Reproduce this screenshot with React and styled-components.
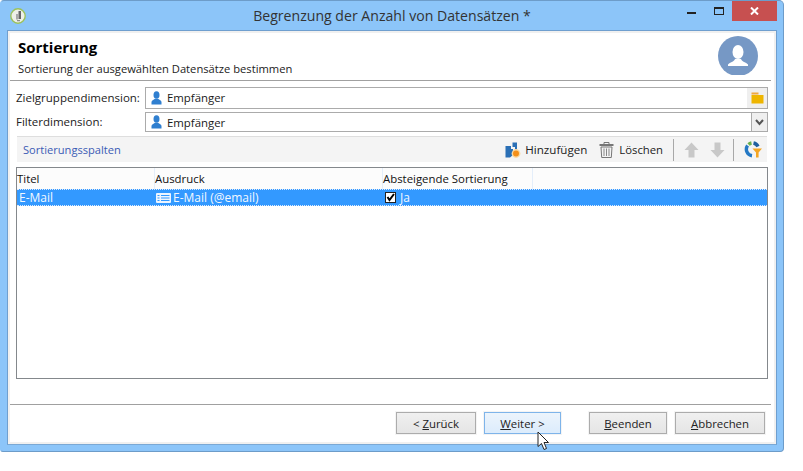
import React from "react";
import styled, { createGlobalStyle } from "styled-components";

const GlobalStyle = createGlobalStyle`
  html, body {
    margin: 0;
    padding: 0;
    background: #fff;
  }
  body {
    width: 803px;
    height: 471px;
    overflow: hidden;
    font-family: "Open Sans", "Liberation Sans", sans-serif;
    font-size: 11.5px;
    color: #1a1a1a;
  }
`;

const Window = styled.div`
  position: relative;
  box-sizing: border-box;
  width: 784px;
  height: 452px;
  display: flex;
  flex-direction: column;
  background: #8cc5f9;
  border: 1px solid #6d9cc9;
  border-left-color: #8cc5f9;
  border-radius: 4px 5px 4px 3px;
  padding: 0 6px 6px 6px;
`;

const TitleBar = styled.div`
  position: relative;
  height: 29px;
  flex: none;
  display: flex;
  align-items: center;
  justify-content: center;
`;

const AppIcon = styled.svg`
  position: absolute;
  left: 3px;
  top: 7px;
`;

const Title = styled.div`
  font-size: 14.1px;
  color: #333;
`;

const Controls = styled.div`
  position: absolute;
  right: 0;
  top: 0;
  display: flex;
  align-items: flex-start;
`;

const ControlButton = styled.div`
  width: ${(p) => p.$w}px;
  height: 20px;
  display: flex;
  align-items: center;
  justify-content: center;
  background: ${(p) => (p.$close ? "#c75050" : "transparent")};
`;

const Client = styled.div`
  flex: 1;
  min-height: 0;
  display: flex;
  flex-direction: column;
  background: #fff;
  border: 1px solid #6f9fcf;
  border-bottom-color: #7aa8d4;
  box-shadow: inset 0 0 0 2px #f0f0f0;
  padding: 2px 3px 2px 2px;
`;

const Header = styled.div`
  height: 47px;
  flex: none;
  display: flex;
  align-items: flex-start;
  justify-content: space-between;
  padding: 0 13px 0 8px;
  border-bottom: 1px solid #a0a0a0;
  margin-right: 2px;
`;

const HeaderText = styled.div`
  display: flex;
  flex-direction: column;
`;

const Heading = styled.div`
  font-size: 15px;
  font-weight: 700;
  color: #000;
  line-height: 19px;
  margin-top: 5px;
`;

const SubHeading = styled.div`
  font-size: 11.2px;
  line-height: 15px;
  margin-top: 4px;
  color: #222;
`;

const Avatar = styled.div`
  width: 40px;
  height: 39px;
  margin-top: 3px;
  overflow: hidden;
`;

const Form = styled.div`
  display: flex;
  flex-direction: column;
  margin: 6px 0 0 6px;
  padding-right: 5px;
`;

const FieldRow = styled.div`
  display: flex;
  align-items: center;
  height: ${(p) => p.$h}px;
  margin-bottom: 3px;
`;

const FieldLabel = styled.div`
  width: 129px;
  flex: none;
  font-size: 11.5px;
  color: #222;
  padding-bottom: 2px;
`;

const Field = styled.div`
  flex: 1;
  height: 100%;
  box-sizing: border-box;
  display: flex;
  align-items: center;
  border: 1px solid #ababab;
  padding-left: 5px;
  font-size: 11.4px;
`;

const FieldValue = styled.span`
  margin-left: 5px;
  flex: 1;
  padding-bottom: ${(p) => p.$lift || 0}px;
`;

const FieldButton = styled.div`
  width: ${(p) => p.$w}px;
  height: 100%;
  display: flex;
  align-items: center;
  justify-content: center;
  background: #efefef;
  border-left: ${(p) => (p.$line ? "1px solid #ababab" : "none")};
`;

const Toolbar = styled.div`
  height: 25px;
  display: flex;
  align-items: center;
  margin: 1px 1px 0 1px;
  padding: 0 3px 0 6px;
  background: #f4f4f4;
  border-top: 1px solid #dedede;
`;

const ToolbarTitle = styled.div`
  flex: 1;
  color: #3b5bb5;
  font-size: 11.1px;
`;

const ToolAction = styled.div`
  display: flex;
  align-items: center;
  gap: ${(p) => p.$gap}px;
  margin-right: ${(p) => p.$right}px;
  font-size: ${(p) => p.$size}px;
  color: #222;
`;

const ToolSep = styled.div`
  width: 1px;
  height: 22px;
  background: #a8a8a8;
`;

const ToolIcon = styled.div`
  display: flex;
  align-items: center;
  margin-left: ${(p) => p.$left}px;
  margin-right: ${(p) => p.$right}px;
`;

const Table = styled.div`
  height: 212px;
  box-sizing: border-box;
  margin-top: 5px;
  border: 1px solid #84888c;
  display: flex;
  flex-direction: column;
`;

const HeadRow = styled.div`
  height: 21px;
  flex: none;
  display: flex;
  background: #fcfcfc;
`;

const HeadCell = styled.div`
  width: ${(p) => p.$w}px;
  flex: none;
  box-sizing: border-box;
  padding: 3px 0 0 0;
  font-size: 11.4px;
  color: #111;
  border-right: 1px solid #e4eefa;
`;

const SelectedRow = styled.div`
  height: 17px;
  flex: none;
  display: flex;
  align-items: center;
  background: #3399ff;
  color: #f2f8ff;
  font-size: 12px;
  border-top: 1px dotted #dbeaff;
  border-bottom: 1px dotted #dbeaff;
  box-sizing: border-box;
`;

const Cell = styled.div`
  width: ${(p) => p.$w}px;
  flex: none;
  box-sizing: border-box;
  padding-left: ${(p) => p.$pad}px;
  display: flex;
  align-items: center;
  gap: ${(p) => p.$gap || 0}px;
`;

const Check = styled.div`
  width: 11px;
  height: 11px;
  box-sizing: border-box;
  background: #fff;
  border: 1px solid #222;
  display: flex;
  align-items: center;
  justify-content: center;
`;

const Footer = styled.div`
  margin-top: auto;
  height: 38px;
  flex: none;
  box-sizing: border-box;
  border-top: 1px solid #a0a0a0;
  margin-right: 2px;
  display: flex;
  align-items: flex-start;
  padding: 7px 0 0 386px;
`;

const Button = styled.div`
  width: ${(p) => p.$w}px;
  height: 22px;
  margin-left: ${(p) => p.$left || 0}px;
  flex: none;
  box-sizing: border-box;
  display: flex;
  align-items: center;
  justify-content: center;
  font-size: 11.4px;
  color: #222;
  border: 1px solid ${(p) => (p.$hover ? "#7eb4ea" : "#acacac")};
  background: ${(p) => (p.$hover ? "linear-gradient(#ecf4fc, #dcecfc)" : "linear-gradient(#f0f0f0, #e5e5e5)")};
  box-shadow: 0 0 0 1px #f4f4f4;
`;

const Underlined = styled.span`
  text-decoration: underline;
`;

const Cursor = styled.svg`
  position: absolute;
  left: 536px;
  top: 430px;
`;

function PersonIcon() {
  return (
    <svg width="11" height="14" viewBox="0 0 11 14">
      <ellipse cx="5.5" cy="4" rx="3" ry="3.8" fill="#2f7fd0" />
      <path d="M0.5 13.5 V11 C0.5 9.4 2.6 8.8 4 7.8 H7 C8.4 8.8 10.5 9.4 10.5 11 V13.5 Z" fill="#2f7fd0" />
    </svg>
  );
}

function FolderIcon() {
  return (
    <svg width="13" height="12" viewBox="0 0 13 12">
      <rect x="0.5" y="0.5" width="7" height="2" fill="#f0a840" />
      <rect x="0.5" y="3" width="12" height="8.5" fill="#eeb500" />
    </svg>
  );
}

function AddIcon() {
  return (
    <svg width="16" height="16" viewBox="0 0 16 16">
      <path d="M5 0.5 H12 V8 H10 V5 H7.5 V0.5 Z" fill="#2a6fb5" />
      <path d="M0.5 4 H6 V7 H8 V13 L5 15.5 H0.5 Z" fill="#2a6fb5" />
      <circle cx="11" cy="11.5" r="4.4" fill="#fbd9a0" />
      <circle cx="11" cy="11.5" r="3" fill="#f5901a" />
    </svg>
  );
}

function TrashIcon() {
  return (
    <svg width="15" height="16" viewBox="0 0 15 16" fill="none">
      <path d="M5 2 V0.5 H10 V2" stroke="#777" />
      <rect x="0.5" y="2" width="14" height="2" fill="#777" />
      <path d="M2 5 H13 L12.3 15.5 H2.7 Z" stroke="#777" />
      <path d="M5 6.5 V14 M7.5 6.5 V14 M10 6.5 V14" stroke="#888" />
    </svg>
  );
}

function ArrowIcon({ down }) {
  return (
    <svg width="15" height="16" viewBox="0 0 15 16">
      <path
        d="M7.5 0.5 L14.5 8 H10.5 V15.5 H4.5 V8 H0.5 Z"
        fill="#c8c8c8"
        transform={down ? "rotate(180 7.5 8)" : undefined}
      />
    </svg>
  );
}

function RefreshFilterIcon() {
  return (
    <svg width="18" height="17" viewBox="0 0 18 17" fill="none">
      <path d="M4.5 3.5 A6.5 6.5 0 0 1 7.5 2" stroke="#6ab04c" strokeWidth="3.4" />
      <path d="M9.5 2 A6.5 6.5 0 0 1 14 5.5" stroke="#1f5f9f" strokeWidth="3.4" />
      <path d="M3.6 4.6 A6.5 6.5 0 0 0 8 14.8" stroke="#2478c4" strokeWidth="3.4" />
      <path d="M8.5 7.5 H18 L14.6 11.5 V16.5 H12 V11.5 Z" fill="#f5a623" />
    </svg>
  );
}

function FieldListIcon() {
  return (
    <svg width="15" height="10" viewBox="0 0 15 10">
      <rect width="15" height="10" rx="1" fill="#eef5ff" />
      <path d="M1.5 2.5 H3.5 M1.5 5 H3.5 M1.5 7.5 H3.5 M5 2.5 H13.5 M5 5 H13.5 M5 7.5 H13.5" stroke="#3399ff" strokeWidth="1.2" />
    </svg>
  );
}

function App() {
  return (
    <>
      <GlobalStyle />
      <Window>
        <TitleBar>
          <AppIcon width="16" height="16" viewBox="0 0 16 16">
            <circle cx="8" cy="8" r="7.2" fill="#eef0e8" stroke="#9cc25c" strokeWidth="1.4" />
            <path d="M8.5 3 H11 V11 H8.5 Z" fill="#666" />
            <path d="M6 6 H8 V11.5 H6 Z" fill="#aaa" />
            <path d="M7 12.2 H10 V13.2 H7 Z" fill="#777" />
          </AppIcon>
          <Title>Begrenzung der Anzahl von Datensätzen *</Title>
          <Controls>
            <ControlButton $w={27}>
              <svg width="9" height="6"><rect width="9" height="2" y="4" fill="#222" /></svg>
            </ControlButton>
            <ControlButton $w={27}>
              <svg width="10" height="8" fill="none"><rect x="0.5" y="0.5" width="9" height="7" stroke="#222" /><rect width="10" height="2" fill="#222" /></svg>
            </ControlButton>
            <ControlButton $w={45} $close>
              <svg width="9" height="8" stroke="#fff" strokeWidth="2"><path d="M1 0.5 L8 7.5 M8 0.5 L1 7.5" /></svg>
            </ControlButton>
          </Controls>
        </TitleBar>
        <Client>
          <Header>
            <HeaderText>
              <Heading>Sortierung</Heading>
              <SubHeading>Sortierung der ausgewählten Datensätze bestimmen</SubHeading>
            </HeaderText>
            <Avatar>
              <svg width="40" height="40" viewBox="0 0 40 40">
                <circle cx="20" cy="20" r="20" fill="#7698c5" />
                <ellipse cx="20" cy="16" rx="5.5" ry="7" fill="#fff" />
                <path d="M10 30 V28.5 C12 26 16 26 17 23 H23 C24 26 28 26 30 28.5 V30 Z" fill="#fff" />
              </svg>
            </Avatar>
          </Header>
          <Form>
            <FieldRow $h={22}>
              <FieldLabel>Zielgruppendimension:</FieldLabel>
              <Field>
                <PersonIcon />
                <FieldValue $lift={2}>Empfänger</FieldValue>
                <FieldButton $w={20}><FolderIcon /></FieldButton>
              </Field>
            </FieldRow>
            <FieldRow $h={20}>
              <FieldLabel>Filterdimension:</FieldLabel>
              <Field>
                <PersonIcon />
                <FieldValue>Empfänger</FieldValue>
                <FieldButton $w={15} $line>
                  <svg width="9" height="7" fill="none" stroke="#555" strokeWidth="2"><path d="M1 1 L4.5 5 L8 1" /></svg>
                </FieldButton>
              </Field>
            </FieldRow>
            <Toolbar>
              <ToolbarTitle>Sortierungsspalten</ToolbarTitle>
              <ToolAction $gap={4} $right={12} $size={11.6}><AddIcon />Hinzufügen</ToolAction>
              <ToolAction $gap={5} $right={10} $size={11.3}><TrashIcon />Löschen</ToolAction>
              <ToolSep />
              <ToolIcon $left={10} $right={11}><ArrowIcon /></ToolIcon>
              <ToolIcon $left={0} $right={8}><ArrowIcon down /></ToolIcon>
              <ToolSep />
              <ToolIcon $left={10} $right={2}><RefreshFilterIcon /></ToolIcon>
            </Toolbar>
            <Table>
              <HeadRow>
                <HeadCell $w={138}>Titel</HeadCell>
                <HeadCell $w={228}>Ausdruck</HeadCell>
                <HeadCell $w={150}>Absteigende Sortierung</HeadCell>
              </HeadRow>
              <SelectedRow>
                <Cell $w={138} $pad={2}>E-Mail</Cell>
                <Cell $w={228} $pad={1} $gap={2}><FieldListIcon />E-Mail (@email)</Cell>
                <Cell $w={150} $pad={2} $gap={4}>
                  <Check>
                    <svg width="9" height="9" fill="none" stroke="#000" strokeWidth="2"><path d="M1.5 4 L3.5 7 L8 1" /></svg>
                  </Check>
                  Ja
                </Cell>
              </SelectedRow>
            </Table>
          </Form>
          <Footer>
            <Button $w={80}>&lt;&nbsp;<Underlined>Z</Underlined>urück</Button>
            <Button $w={77} $left={8} $hover><Underlined>W</Underlined>eiter &gt;</Button>
            <Button $w={78} $left={28}><Underlined>B</Underlined>eenden</Button>
            <Button $w={90} $left={8}><Underlined>A</Underlined>bbrechen</Button>
          </Footer>
        </Client>
        <Cursor width="13" height="20" viewBox="0 0 13 20">
          <path d="M1 1 V15.5 L4.5 12.5 L7 18.5 L9.5 17.5 L7 11.5 H11.5 Z" fill="#fff" stroke="#222" strokeWidth="1" />
        </Cursor>
      </Window>
    </>
  );
}

export default App;
